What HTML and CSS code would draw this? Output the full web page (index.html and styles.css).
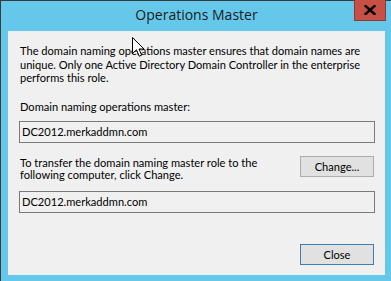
FILE: index.html
```html
<!DOCTYPE html>
<html>
<head>
<meta charset="utf-8">
<link rel="stylesheet" href="styles.css">
</head>
<body>
<div class="window">
  <div class="titlebar">
    <span class="spacer"></span>
    <span class="title">Operations Master</span>
    <span class="close-wrap"><span class="close-btn">
      <svg width="12" height="10" viewBox="0 0 12 10"><path d="M1.5 1 L10.5 9 M10.5 1 L1.5 9" stroke="#000" stroke-width="2.4" stroke-linecap="square"/></svg>
    </span></span>
  </div>
  <div class="client">
    <p class="desc">The domain naming operations master ensures that domain names are unique. Only one Active Directory Domain Controller in the enterprise performs this role.</p>
    <div class="label">Domain naming operations master:</div>
    <div class="textbox">DC2012.merkaddmn.com</div>
    <div class="transfer-row">
      <div class="transfer-text">To transfer the domain naming master role to the following computer, click Change.</div>
      <button class="btn">Change...</button>
    </div>
    <div class="textbox tb2">DC2012.merkaddmn.com</div>
    <div class="footer">
      <button class="btn btn-default">Close</button>
    </div>
  </div>
  <svg class="cursor" width="13" height="21" viewBox="0 0 13 21"><path d="M0.5 0.5 L0.5 16.5 L4.5 12.8 L7.2 19.2 L9.6 18.2 L7 12 L12 12 Z" fill="#fff" stroke="#000" stroke-width="1" stroke-linejoin="miter"/></svg>
</div>
</body>
</html>
```

FILE: styles.css
```css
html, body {
  margin: 0;
  padding: 0;
}
body {
  width: 391px;
  height: 281px;
  overflow: hidden;
  font-family: Lato, "Liberation Sans", sans-serif;
  font-size: 11.1px;
  color: #000;
}
.window {
  position: relative;
  width: 391px;
  height: 281px;
  box-sizing: border-box;
  background: #65c8ea;
  border-left: 1px solid #3a3a3a;
  border-top: 1px solid #3a3a3a;
  padding: 0 6px 6px 7px;
  display: flex;
  flex-direction: column;
}
.titlebar {
  height: 30px;
  display: grid;
  grid-template-columns: 1fr auto 1fr;
  align-items: start;
}
.title {
  font-family: "Open Sans", "Liberation Sans", sans-serif;
  font-size: 14px;
  color: #1c1c1c;
  line-height: 30px;
  margin-top: -1px;
}
.close-wrap {
  justify-self: end;
  margin-right: -1px;
  margin-top: -1px;
}
.close-btn {
  display: flex;
  align-items: center;
  justify-content: center;
  width: 32px;
  height: 21px;
  box-sizing: border-box;
  background: #c75046;
  border: 1px solid #8c3a33;
  border-top: none;
}
.client {
  flex: 1;
  background: #f0f0f0;
  padding: 13px 10px 0 11px;
  display: flex;
  flex-direction: column;
}
.desc {
  margin: 0 0 0 1px;
  line-height: 13.5px;
}
.label {
  margin: 15px 0 0 1px;
  line-height: 13px;
}
.textbox {
  margin-top: 8px;
  height: 22px;
  box-sizing: border-box;
  border: 1px solid #7a7a7a;
  background: #f0f0f0;
  padding: 0 0 0 2px;
  line-height: 19px;
}
.transfer-row {
  margin-top: 13px;
  display: flex;
  justify-content: space-between;
  align-items: flex-start;
}
.transfer-text {
  width: 260px;
  margin: 1px 0 0 1px;
  line-height: 12.5px;
}
.btn {
  width: 74px;
  height: 21px;
  box-sizing: border-box;
  margin-right: 1px;
  border: 1px solid #adadad;
  background: #e1e1e1;
  font-family: Lato, "Liberation Sans", sans-serif;
  font-size: 11.1px;
  color: #000;
  padding: 0;
  margin-top: 0;
}
.tb2 {
  margin-top: 9px;
}
.footer {
  margin-top: 31px;
  display: flex;
  justify-content: flex-end;
}
.btn-default {
  border-color: #3c7fb1;
}
.cursor {
  position: absolute;
  left: 131px;
  top: 36px;
}
```
